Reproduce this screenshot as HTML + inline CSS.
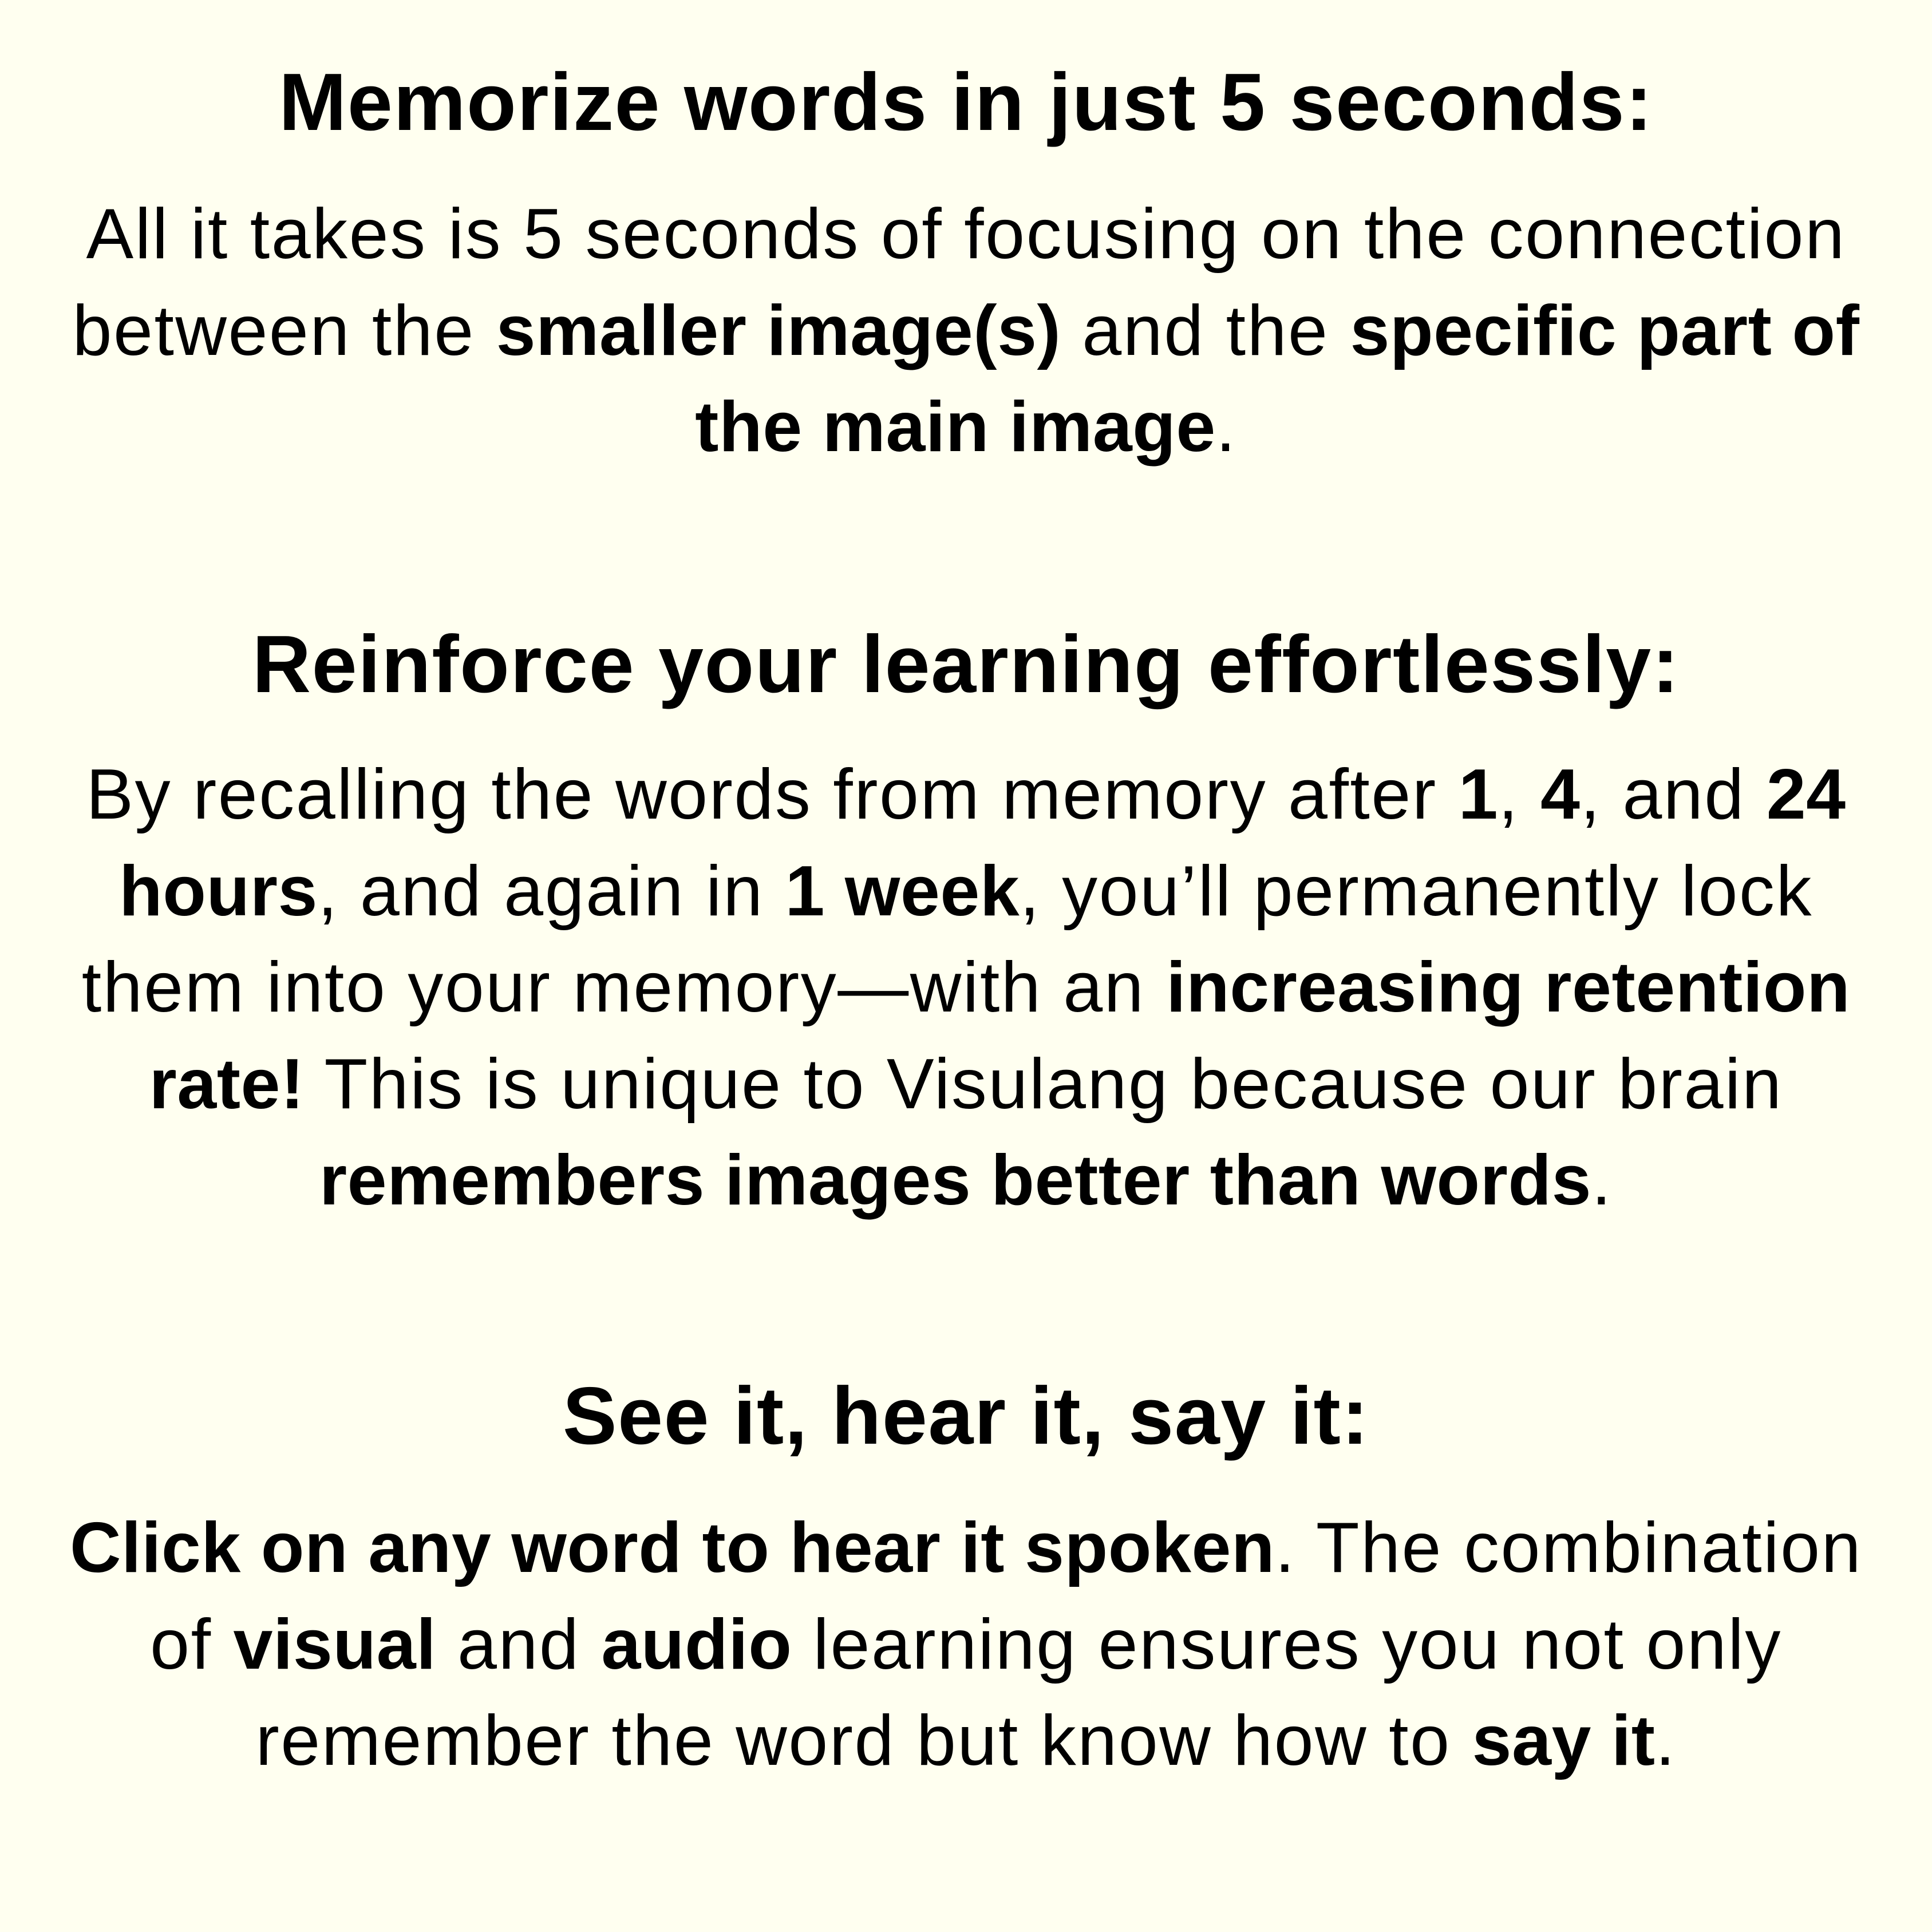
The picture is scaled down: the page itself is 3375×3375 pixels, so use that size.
<!DOCTYPE html>
<html><head><meta charset="utf-8">
<style>
html,body{margin:0;padding:0;}
body{width:3375px;height:3375px;background:#fffff0;position:relative;overflow:hidden;font-family:"Liberation Sans",sans-serif;color:#000;}
.h{position:absolute;left:0;width:3375px;text-align:center;font-weight:bold;font-size:142px;line-height:200px;white-space:nowrap;letter-spacing:1.5px;}
.p{position:absolute;left:0;width:3375px;text-align:center;font-size:124px;line-height:168.5px;white-space:nowrap;letter-spacing:2.5px;}
.p b{font-weight:bold;letter-spacing:0.5px;}
</style></head><body>
<div class="h" style="top:79px">Memorize words in just 5 seconds:</div>
<div class="p" style="top:325px">All it takes is 5 seconds of focusing on the connection<br>between the <b>smaller image(s)</b> and the <b>specific part of</b><br><b>the main image</b>.</div>
<div class="h" style="top:1061px">Reinforce your learning effortlessly:</div>
<div class="p" style="top:1304px">By recalling the words from memory after <b>1</b>, <b>4</b>, and <b>24</b><br><b>hours</b>, and again in <b>1 week</b>, you’ll permanently lock<br>them into your memory—with an <b>increasing retention</b><br><b>rate!</b> This is unique to Visulang because our brain<br><b>remembers images better than words</b>.</div>
<div class="h" style="top:2374px">See it, hear it, say it:</div>
<div class="p" style="top:2620px"><b>Click on any word to hear it spoken</b>. The combination<br>of <b>visual</b> and <b>audio</b> learning ensures you not only<br>remember the word but know how to <b>say it</b>.</div>
</body></html>
